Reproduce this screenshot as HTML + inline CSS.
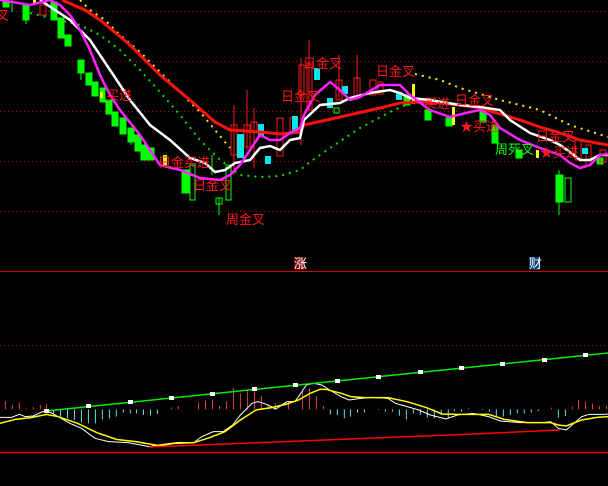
<!DOCTYPE html><html><head><meta charset="utf-8"><style>
html,body{margin:0;padding:0;background:#000;width:608px;height:486px;overflow:hidden}
svg{display:block}
text{font-family:"Liberation Sans","WenQuanYi Zen Hei","Noto Sans CJK SC",sans-serif;font-size:13px}
.z *{vector-effect:non-scaling-stroke}
</style></head><body>
<svg width="608" height="486" viewBox="0 0 608 486" xmlns="http://www.w3.org/2000/svg">
<g stroke="#b00" stroke-width="1" stroke-dasharray="1,3">
<line x1="0" y1="11.5" x2="608" y2="11.5"/><line x1="0" y1="61.5" x2="608" y2="61.5"/><line x1="0" y1="111.5" x2="608" y2="111.5"/><line x1="0" y1="161.5" x2="608" y2="161.5"/><line x1="0" y1="211.5" x2="608" y2="211.5"/><line x1="0" y1="345.5" x2="608" y2="345.5"/>
</g>
<line x1="0" y1="271.5" x2="608" y2="271.5" stroke="#c00"/>
<line x1="0" y1="452.5" x2="608" y2="452.5" stroke="#e00" stroke-width="1.5"/>
<g fill="#00ff00" stroke="#00ff00">
<rect x="3" y="2" width="6" height="5"/><line x1="12" y1="0" x2="12" y2="12"/>
<rect x="23" y="5" width="6" height="15"/><line x1="26" y1="5" x2="26" y2="24"/>
<rect x="51" y="2" width="6" height="18"/><rect x="58" y="18" width="6" height="20"/><rect x="65" y="35" width="6" height="11"/>
<rect x="78" y="60" width="6" height="13"/><line x1="81" y1="60" x2="81" y2="80"/>
<rect x="86" y="73" width="6" height="12"/><rect x="92" y="82" width="6" height="14"/>
<rect x="100" y="88" width="5" height="14"/><rect x="106" y="100" width="6" height="14"/><rect x="112" y="112" width="6" height="14"/>
<rect x="120" y="118" width="6" height="16"/><rect x="128" y="128" width="6" height="14"/><line x1="131" y1="128" x2="131" y2="145"/>
<rect x="135" y="135" width="6" height="16"/><rect x="141" y="145" width="6" height="15"/><rect x="148" y="148" width="6" height="12"/>
<rect x="182" y="170" width="7" height="23"/><line x1="212" y1="155" x2="212" y2="175"/>
<rect x="404" y="95" width="6" height="10"/><rect x="425" y="110" width="6" height="10"/>
<rect x="446" y="118" width="6" height="8"/><rect x="480" y="110" width="6" height="12"/>
<rect x="492" y="125" width="6" height="18"/><rect x="516" y="150" width="6" height="8"/>
<rect x="556" y="175" width="7" height="27"/><line x1="559" y1="170" x2="559" y2="215"/>
<rect x="597" y="158" width="6" height="6"/>
</g>
<g fill="none" stroke="#00ff00">
<rect x="190" y="165" width="5" height="35"/><rect x="216" y="198" width="6" height="6"/><line x1="219" y1="198" x2="219" y2="215"/>
<rect x="226" y="165" width="5" height="35"/><rect x="334" y="108" width="5" height="5"/><rect x="565" y="178" width="6" height="24"/>
</g>
<g fill="none" stroke="#ff1a1a">
<rect x="231" y="125" width="6" height="30"/><line x1="234" y1="105" x2="234" y2="175"/>
<rect x="244" y="125" width="6" height="22"/><line x1="247" y1="90" x2="247" y2="150"/>
<rect x="251" y="122" width="6" height="10"/><line x1="254" y1="108" x2="254" y2="168"/>
<rect x="277" y="118" width="6" height="38"/><rect x="290" y="118" width="5" height="15"/>
<rect x="299" y="65" width="5" height="30"/><line x1="301" y1="58" x2="301" y2="145"/>
<rect x="307" y="65" width="5" height="45"/><line x1="309" y1="40" x2="309" y2="110"/>
<rect x="336" y="80" width="6" height="20"/><line x1="339" y1="55" x2="339" y2="100"/>
<rect x="354" y="78" width="6" height="20"/><line x1="357" y1="55" x2="357" y2="100"/>
<rect x="370" y="80" width="6" height="15"/><rect x="378" y="82" width="5" height="12"/>
<rect x="575" y="140" width="6" height="20"/><rect x="586" y="145" width="5" height="20"/>
<rect x="600" y="150" width="6" height="12"/><rect x="40" y="5" width="6" height="10"/>
</g>
<g fill="#00e8e8">
<rect x="237" y="134" width="7" height="24"/><rect x="258" y="124" width="6" height="12"/><rect x="265" y="156" width="6" height="8"/>
<rect x="292" y="116" width="6" height="18"/><rect x="314" y="68" width="6" height="12"/><rect x="327" y="98" width="6" height="10"/>
<rect x="342" y="86" width="6" height="8"/><rect x="396" y="92" width="6" height="8"/><rect x="582" y="148" width="6" height="6"/>
</g>
<g fill="#ffff00"><rect x="163" y="155" width="4" height="10"/><rect x="412" y="84" width="3" height="20"/><rect x="452" y="107" width="3" height="18"/><rect x="536" y="150" width="3" height="8"/><rect x="100" y="92" width="3" height="6"/><rect x="33" y="0" width="3" height="5"/></g>
<polyline fill="none" stroke="#00e000" stroke-width="2" stroke-dasharray="2,5" points="30,13 80,25 100,35 120,50 140,70 160,92 180,115 200,140 220,160 240,175 260,177 280,176 300,170 310,162 330,148 360,128 390,112 410,103"/>
<polyline fill="none" stroke="#ffee00" stroke-width="2" stroke-dasharray="2,5" points="80,0 90,10 105,20 120,35 140,52 160,72 180,92 200,112 215,130 230,148"/>
<polyline fill="none" stroke="#ffee00" stroke-width="2" stroke-dasharray="2,5" points="415,74 440,80 460,88 500,100 540,110 570,125 608,137"/>
<polyline fill="none" stroke="#ff1010" stroke-width="3" points="62,0 85,10 100,20 130,45 160,75 190,100 215,122 230,130 260,132 280,134 300,132 304,125 340,117 380,108 400,103 420,102 440,103 460,105 480,108 500,114 520,120 540,127 560,133 580,140 608,145"/>
<polyline fill="none" stroke="#ffffff" stroke-width="2.5" points="40,0 70,20 90,40 110,70 130,100 150,125 170,140 190,158 205,163 215,172 225,170 235,163 250,160 260,148 270,146 280,150 290,140 300,138 304,120 320,105 340,103 350,98 370,93 390,90 400,93 410,98 430,100 460,105 480,107 500,110 510,120 530,133 550,140 560,145 570,152 580,160 590,160 600,155 608,155"/>
<polyline fill="none" stroke="#ff22ff" stroke-width="2.5" points="0,0 30,5 50,0 60,5 70,15 80,30 90,50 100,75 110,95 120,110 140,135 150,150 160,165 180,170 200,178 220,180 230,175 240,165 250,150 260,135 270,140 280,140 290,133 300,128 304,115 315,95 330,82 340,90 350,100 360,97 380,85 400,85 410,95 430,110 450,117 470,112 480,110 490,115 500,128 520,140 540,148 560,155 570,163 580,168 590,165 600,155 608,154"/>
<g fill="#ff1a1a">
<text x="226" y="224">周金叉</text><text x="193" y="190">日金叉</text><text x="158" y="167">日金买进</text><text x="106" y="100">买进</text>
<text x="281" y="101">日金叉</text><text x="303" y="68">日金叉</text><text x="376" y="76">日金叉</text><text x="455" y="105">日金叉</text>
<text x="460" y="131">★买进</text><text x="536" y="141">日金叉</text><text x="540" y="157">★买进</text><text x="424" y="108">买进</text><text x="-4" y="20">叉</text>
</g>
<text x="495" y="154" fill="#00ff00">周死叉</text>
<rect x="294" y="257" width="11" height="13" fill="#7a0000"/><text x="294" y="268" fill="#fff" font-size="11">涨</text>
<rect x="529" y="257" width="11" height="13" fill="#0a3a70"/><text x="529" y="268" fill="#fff" font-size="11">财</text>
<g class="z" transform="translate(0,250) scale(0.38776,0.33333)">
<path stroke="#e04040" stroke-width="1" d="M14 478V453M32 478V465M50 478V458M68 478V475M86 478V470M104 478V465M120 478V462M442 478V472M460 478V468M512 478V458M530 478V452M548 478V450M566 478V468M584 478V455M602 478V413M620 478V430M638 478V418M656 478V420M674 478V438M692 478V462M710 478V460M744 478V455M780 478V420M798 478V415M816 478V438M834 478V468M1208 478V474M1422 478V473M1476 478V470M1492 478V450M1510 478V455M1528 478V460M1546 478V468M1564 478V468"/>
<path stroke="#60e0e8" stroke-width="1" d="M138 478V493M156 478V500M174 478V505M192 478V510M210 478V518M228 478V520M246 478V520M264 478V508M282 478V505M300 478V500M318 478V488M336 478V490M352 478V490M370 478V495M388 478V497M406 478V492M852 478V493M870 478V496M888 478V505M904 478V500M922 478V488M940 478V488M976 478V480M994 478V485M1012 478V485M1030 478V497M1048 478V508M1066 478V490M1084 478V495M1102 478V503M1120 478V505M1138 478V495M1156 478V503M1172 478V483M1190 478V485M1244 478V480M1262 478V485M1280 478V500M1298 478V500M1316 478V495M1334 478V490M1352 478V490M1370 478V488M1388 478V483M1440 478V503M1458 478V498"/>
<polyline fill="none" stroke="#fff" stroke-width="1" points="0,502 30,502 50,493 65,500 85,498 110,485 130,487 150,500 180,520 210,535 245,565 280,575 330,578 385,590 420,583 460,577 500,578 520,560 550,545 575,545 600,525 620,495 650,460 665,455 680,460 700,470 710,478 740,455 760,455 770,440 790,405 810,400 830,405 850,420 880,440 900,450 930,445 960,442 1000,445 1020,460 1050,470 1080,480 1110,495 1150,507 1180,495 1220,490 1260,500 1290,513 1340,518 1400,518 1420,515 1440,535 1460,540 1480,520 1500,500 1520,493 1560,493 1568,492"/>
<polyline fill="none" stroke="#ffff00" stroke-width="1.5" points="0,520 40,508 80,503 120,493 150,500 200,520 250,548 300,568 350,575 410,587 450,580 500,578 540,563 580,545 620,510 660,480 700,473 740,462 770,450 800,430 825,418 840,418 880,430 905,440 940,443 1000,443 1050,455 1100,473 1140,492 1180,493 1260,493 1300,508 1360,518 1420,518 1440,525 1460,528 1500,510 1540,502 1568,500"/>
</g>
<polyline fill="none" stroke="#00ee00" stroke-width="1.5" points="46,411 608,353"/>
<g fill="#fff"><rect x="44" y="409" width="5" height="4"/><rect x="86" y="404" width="5" height="4"/><rect x="128" y="400" width="5" height="4"/><rect x="169" y="396" width="5" height="4"/><rect x="210" y="392" width="5" height="4"/><rect x="252" y="387" width="5" height="4"/><rect x="293" y="383" width="5" height="4"/><rect x="335" y="379" width="5" height="4"/><rect x="376" y="375" width="5" height="4"/><rect x="418" y="370" width="5" height="4"/><rect x="459" y="366" width="5" height="4"/><rect x="500" y="362" width="5" height="4"/><rect x="542" y="358" width="5" height="4"/><rect x="583" y="353" width="5" height="4"/></g>
<polyline fill="none" stroke="#ff0000" stroke-width="1.5" points="149,447 250,443 350,439 450,435 560,430"/>
</svg>
</body></html>
